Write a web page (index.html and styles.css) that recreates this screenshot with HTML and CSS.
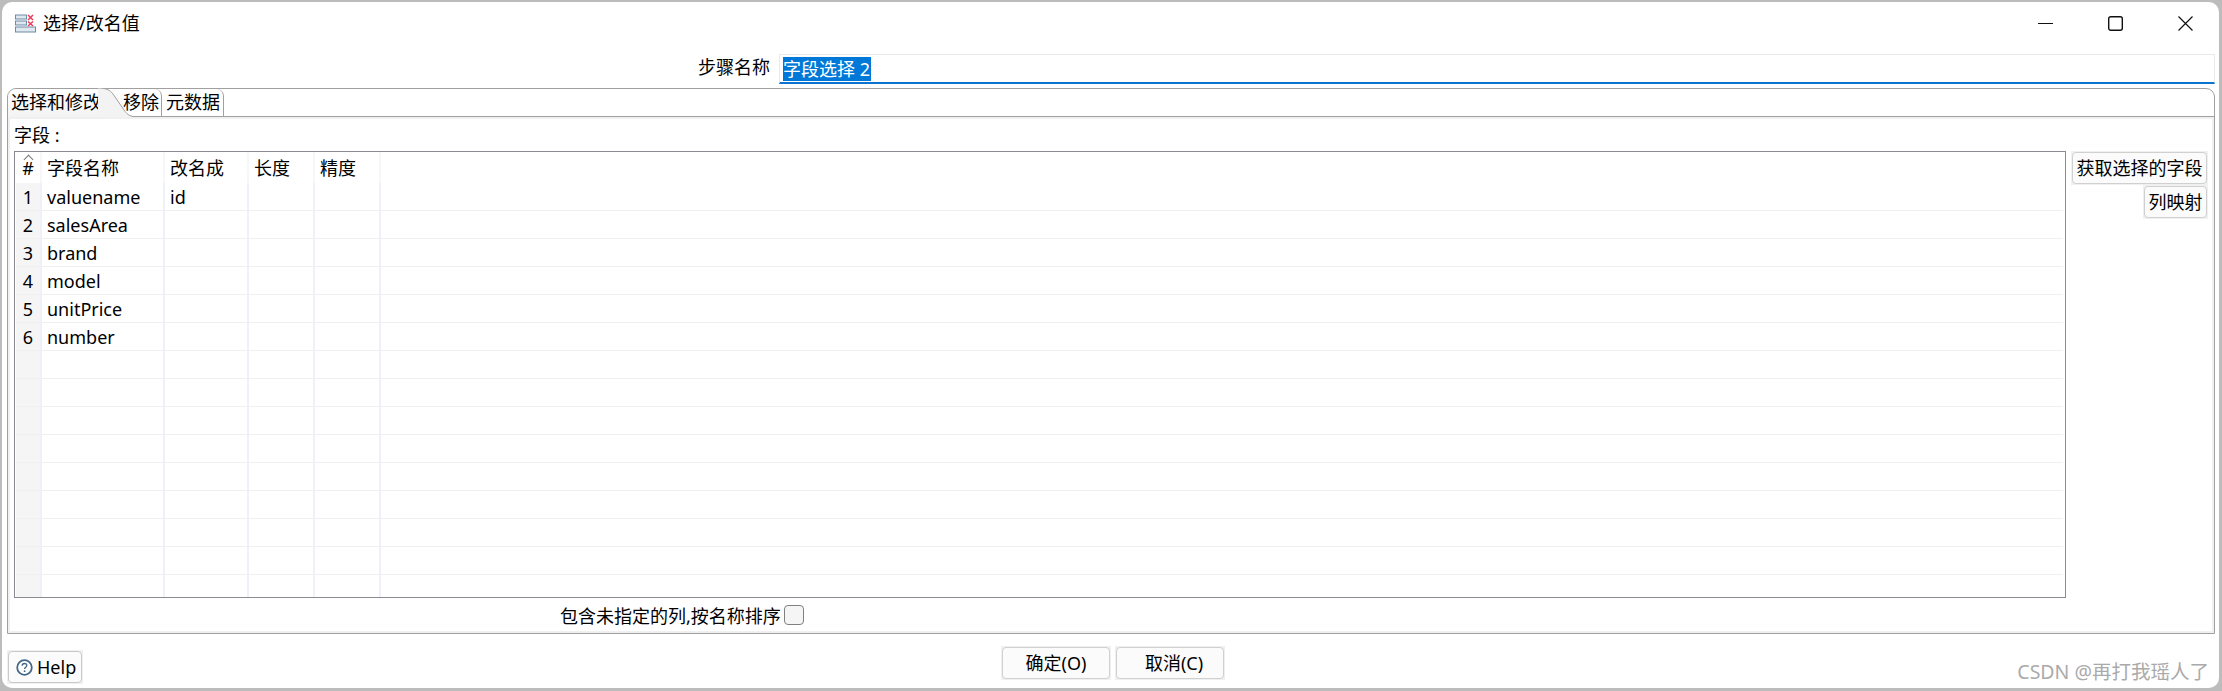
FILE: index.html
```html
<!DOCTYPE html>
<html lang="zh">
<head>
<meta charset="utf-8">
<title>选择/改名值</title>
<link rel="stylesheet" href="styles.css">
</head>
<body>
<div class="window">
  <header class="titlebar">
    <svg class="app-icon" width="21" height="19" viewBox="0 0 21 19">
      <rect x="0.5" y="1" width="11" height="4" fill="#dfe7ef" stroke="#6d8ba6"/>
      <rect x="0.5" y="7" width="11" height="4" fill="#dfe7ef" stroke="#6d8ba6"/>
      <rect x="0.5" y="13" width="20" height="5" fill="#dfe7ef" stroke="#6d8ba6"/>
      <path d="M13 1l5 5M18 1l-5 5M13 7.500l5 4.500M18 7.500l-5 4.500" stroke="#ee3a55" stroke-width="1.500"/>
    </svg>
    <span class="title">选择/改名值</span>
    <div class="controls">
      <svg width="15" height="15" viewBox="0 0 15 15"><path d="M0 7.500h15" stroke="#111" stroke-width="1.200"/></svg>
      <svg width="15" height="15" viewBox="0 0 15 15"><rect x="0.700" y="0.700" width="13.600" height="13.600" rx="2" fill="none" stroke="#111" stroke-width="1.400"/></svg>
      <svg width="15" height="15" viewBox="0 0 15 15"><path d="M0.500 0.500l14 14M14.500 0.500l-14 14" stroke="#111" stroke-width="1.200"/></svg>
    </div>
  </header>

  <div class="step-row">
    <label class="step-label">步骤名称</label>
    <div class="step-input"><span class="selected">字段选择 2</span></div>
  </div>

  <section class="folder">
    <div class="tabs">
      <div class="tab tab-active">选择和修改
        <svg class="tab-curve" width="34" height="29" viewBox="0 0 34 29">
          <path d="M0 0C8 0 12 2 15 6L26 22C29 26 31 28 34 28V29H0Z" fill="#f3f3f3"/>
          <path d="M0 0C8 0 12 2 15 6L26 22C29 26 31 28 34 28" fill="none" stroke="#a0a0a0"/>
        </svg>
      </div>
      <div class="tab tab-remove">移除</div>
      <div class="tab tab-meta">元数据</div>
    </div>
    <div class="client">
      <div class="fields-label">字段 :</div>
      <div class="fields-body">
        <div class="grid-box">
          <table class="grid">
            <colgroup><col class="c-idx"><col class="c-name"><col class="c-rename"><col class="c-len"><col class="c-prec"><col></colgroup>
            <thead>
              <tr><th class="idx"><span class="sort"></span>#</th><th>字段名称</th><th>改名成</th><th>长度</th><th>精度</th><th></th></tr>
            </thead>
            <tbody>
              <tr><td class="idx">1</td><td>valuename</td><td>id</td><td></td><td></td><td></td></tr>
              <tr><td class="idx">2</td><td>salesArea</td><td></td><td></td><td></td><td></td></tr>
              <tr><td class="idx">3</td><td>brand</td><td></td><td></td><td></td><td></td></tr>
              <tr><td class="idx">4</td><td>model</td><td></td><td></td><td></td><td></td></tr>
              <tr><td class="idx">5</td><td>unitPrice</td><td></td><td></td><td></td><td></td></tr>
              <tr><td class="idx">6</td><td>number</td><td></td><td></td><td></td><td></td></tr>
              <tr><td class="idx"></td><td></td><td></td><td></td><td></td><td></td></tr>
              <tr><td class="idx"></td><td></td><td></td><td></td><td></td><td></td></tr>
              <tr><td class="idx"></td><td></td><td></td><td></td><td></td><td></td></tr>
              <tr><td class="idx"></td><td></td><td></td><td></td><td></td><td></td></tr>
              <tr><td class="idx"></td><td></td><td></td><td></td><td></td><td></td></tr>
              <tr><td class="idx"></td><td></td><td></td><td></td><td></td><td></td></tr>
              <tr><td class="idx"></td><td></td><td></td><td></td><td></td><td></td></tr>
              <tr><td class="idx"></td><td></td><td></td><td></td><td></td><td></td></tr>
              <tr class="last"><td class="idx"></td><td></td><td></td><td></td><td></td><td></td></tr>
            </tbody>
          </table>
        </div>
        <div class="side-buttons">
          <div class="btn-wrap"><button class="btn btn-get">获取选择的字段</button></div>
          <div class="btn-wrap"><button class="btn btn-map">列映射</button></div>
        </div>
      </div>
      <div class="option-row">
        <span>包含未指定的列,按名称排序</span><span class="checkbox"></span>
      </div>
    </div>
  </section>

  <footer class="footer">
    <div class="btn-wrap help-wrap">
      <button class="btn btn-help">
        <svg width="17" height="17" viewBox="0 0 17 17"><circle cx="8.500" cy="8.500" r="7.300" fill="#fff" stroke="#44688a" stroke-width="1.800"/><path d="M6.200 6.700C6.200 5.300 7.200 4.500 8.500 4.500S10.800 5.300 10.800 6.600C10.800 8.200 8.600 8.300 8.600 10" fill="none" stroke="#44688a" stroke-width="1.300"/><circle cx="8.600" cy="12.200" r="0.900" fill="#44688a"/></svg>
        Help
      </button>
    </div>
    <div class="actions">
      <div class="btn-wrap"><button class="btn btn-ok">确定(O)</button></div>
      <div class="btn-wrap"><button class="btn btn-ok btn-cancel">取消(C)</button></div>
    </div>
    <div class="watermark">CSDN @再打我瑶人了</div>
  </footer>
</div>
</body>
</html>
```
FILE: styles.css
```css
* { box-sizing: border-box; }
html, body { margin: 0; padding: 0; }
body {
  width: 2222px;
  height: 691px;
  overflow: hidden;
  background: #bcbcbc;
  font-family: "Noto Sans", "Noto Sans CJK SC", sans-serif;
  font-size: 18px;
  color: #000;
}
.window {
  width: 2217px;
  height: 686px;
  margin-top: 2px;
  margin-left: 2px;
  background: #fff;
  border-radius: 10px;
  display: flex;
  flex-direction: column;
  overflow: hidden;
}
.titlebar {
  height: 42px;
  flex: none;
  display: flex;
  align-items: center;
  padding-left: 13px;
}
.app-icon { flex: none; }
.title { margin-left: 7px; line-height: 24px; }
.controls {
  margin-left: auto;
  margin-right: 26px;
  display: flex;
  gap: 55px;
}
.step-row {
  height: 44px;
  flex: none;
  display: flex;
  padding-top: 10px;
  padding-left: 696px;
}
.step-label { width: 81px; line-height: 26px; }
.step-input {
  width: 1436px;
  height: 30px;
  border: 1px solid #e9e9e9;
  border-bottom: 2px solid #0a74d0;
  padding: 2px 0 0 3px;
}
.selected {
  display: inline-block;
  height: 24px;
  line-height: 24px;
  background: #0078d7;
  color: #fff;
  padding: 0 1px 0 0;
}
.folder {
  width: 2208px;
  margin-left: 5px;
  height: 546px;
  flex: none;
  border: 1px solid #a0a0a0;
  border-radius: 9px 9px 0 0;
  display: flex;
  flex-direction: column;
}
.tabs {
  height: 28px;
  flex: none;
  display: flex;
  border-bottom: 1px solid #a0a0a0;
  line-height: 27px;
  position: relative;
}
.tab { height: 28px; white-space: nowrap; }
.tab-active {
  width: 115px;
  padding-left: 3px;
  background: linear-gradient(#fff, #f3f3f3);
  border-radius: 9px 0 0 0;
  position: relative;
  z-index: 1;
}
.tab-curve { position: absolute; left: 90px; top: -1px; }
.tab-remove {
  width: 39px;
  position: relative;
  z-index: 2;
  border-right: 1px solid #a0a0a0;
  border-top-right-radius: 7px;
}
.tab-meta {
  width: 62px;
  padding-left: 4px;
  border-right: 1px solid #a0a0a0;
  border-top-right-radius: 7px;
}
.client {
  flex: 1;
  min-height: 0;
  border: 2px solid #f0f0f0;
  padding: 0 4px;
  display: flex;
  flex-direction: column;
}
.fields-label { height: 33px; line-height: 30px; padding-top: 1px; }
.fields-body { display: flex; gap: 5px; height: 447px; flex: none; }
.grid-box {
  width: 2052px;
  height: 447px;
  flex: none;
  border: 1px solid #8a8a94;
  padding: 0 2px 0 1px;
  overflow: hidden;
}
.grid {
  width: 100%;
  table-layout: fixed;
  border-collapse: separate;
  border-spacing: 0;
}
.c-idx { width: 26px; }
.c-name { width: 123px; }
.c-rename { width: 84px; }
.c-len { width: 66px; }
.c-prec { width: 66px; }
.grid th {
  height: 31px;
  padding: 0 0 0 5px;
  font-weight: 400;
  text-align: left;
  line-height: 24px;
  border-right: 2px solid #f6f7fa;
}
.grid td {
  height: 28px;
  padding: 0 0 0 5px;
  line-height: 26px;
  border-right: 2px solid #eef1f8;
  border-bottom: 1px solid #f0f0f0;
}
.grid tr > :last-child { border-right: 0; }
.grid .idx {
  padding: 0;
  text-align: center;
  background: #f5f5f5;
}
.grid th.idx { background: #fff; position: relative; }
.sort {
  position: absolute;
  left: 9px;
  top: 4px;
  width: 7px;
  height: 7px;
  border-left: 1px solid #777;
  border-top: 1px solid #777;
  transform: rotate(45deg);
}
.side-buttons {
  flex: 1;
  display: flex;
  flex-direction: column;
  align-items: flex-end;
}
.btn-wrap { background: #f0f0f0; padding: 1px; flex: none; }
.btn {
  display: block;
  font: inherit;
  color: inherit;
  background: #fbfbfb;
  border: 1px solid #d0d0d0;
  border-radius: 4px;
  padding: 0;
  line-height: 28px;
  white-space: nowrap;
}
.btn-get { width: 135px; height: 32px; }
.btn-map { width: 63px; height: 32px; }
.option-row {
  height: 34px;
  display: flex;
  align-items: center;
  padding-left: 546px;
  gap: 3px;
  padding-top: 1px;
}
.checkbox {
  width: 20px;
  height: 20px;
  background: #f5f5f5;
  border: 1px solid #808080;
  border-radius: 4px;
}
.footer {
  flex: 1;
  position: relative;
  display: flex;
  padding-top: 14px;
}
.help-wrap { margin-left: 5px; height: 34px; margin-top: 2px; }
.btn-help {
  width: 74px;
  height: 32px;
  display: flex;
  align-items: center;
  gap: 4px;
  padding-left: 7px;
  border-color: #c9c9c9;
}
.actions {
  display: flex;
  gap: 4px;
  margin-left: 918px;
  height: 34px;
  margin-top: -2px;
}
.btn-ok { width: 108px; height: 32px; }
.btn-cancel { padding-left: 8px; }
.watermark {
  position: absolute;
  right: 10px;
  bottom: 3px;
  font-size: 19.5px;
  color: #aaa;
  line-height: 26px;
}
```
